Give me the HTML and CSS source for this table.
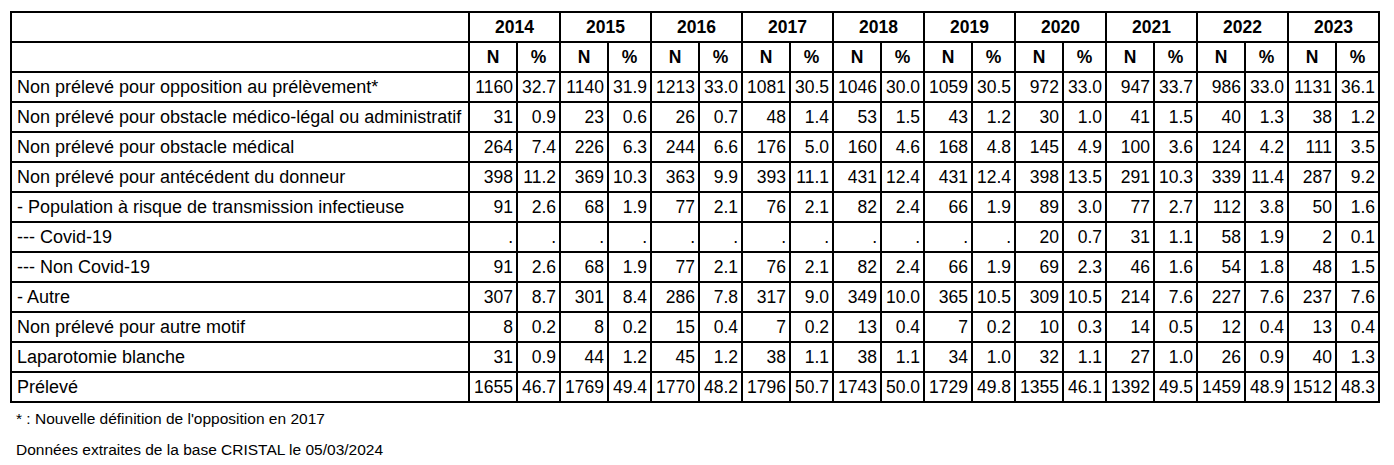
FILE: index.html
```html
<!DOCTYPE html>
<html lang="fr">
<head>
<meta charset="utf-8">
<title>Non prélevés</title>
<link rel="stylesheet" href="styles.css">
</head>
<body>
<table class="stats">
<colgroup>
<col class="c-label">
<col class="c-n"><col class="c-p">
<col class="c-n"><col class="c-p">
<col class="c-n"><col class="c-p">
<col class="c-n"><col class="c-p">
<col class="c-n"><col class="c-p">
<col class="c-n"><col class="c-p">
<col class="c-n"><col class="c-p">
<col class="c-n"><col class="c-p">
<col class="c-n"><col class="c-p">
<col class="c-n"><col class="c-p">
</colgroup>
<thead>
<tr class="yr"><th></th><th colspan="2">2014</th><th colspan="2">2015</th><th colspan="2">2016</th><th colspan="2">2017</th><th colspan="2">2018</th><th colspan="2">2019</th><th colspan="2">2020</th><th colspan="2">2021</th><th colspan="2">2022</th><th colspan="2">2023</th></tr>
<tr class="np"><th></th><th>N</th><th>%</th><th>N</th><th>%</th><th>N</th><th>%</th><th>N</th><th>%</th><th>N</th><th>%</th><th>N</th><th>%</th><th>N</th><th>%</th><th>N</th><th>%</th><th>N</th><th>%</th><th>N</th><th>%</th></tr>
</thead>
<tbody>
<tr><td>Non prélevé pour opposition au prélèvement*</td><td>1160</td><td>32.7</td><td>1140</td><td>31.9</td><td>1213</td><td>33.0</td><td>1081</td><td>30.5</td><td>1046</td><td>30.0</td><td>1059</td><td>30.5</td><td>972</td><td>33.0</td><td>947</td><td>33.7</td><td>986</td><td>33.0</td><td>1131</td><td>36.1</td></tr>
<tr><td>Non prélevé pour obstacle médico-légal ou administratif</td><td>31</td><td>0.9</td><td>23</td><td>0.6</td><td>26</td><td>0.7</td><td>48</td><td>1.4</td><td>53</td><td>1.5</td><td>43</td><td>1.2</td><td>30</td><td>1.0</td><td>41</td><td>1.5</td><td>40</td><td>1.3</td><td>38</td><td>1.2</td></tr>
<tr><td>Non prélevé pour obstacle médical</td><td>264</td><td>7.4</td><td>226</td><td>6.3</td><td>244</td><td>6.6</td><td>176</td><td>5.0</td><td>160</td><td>4.6</td><td>168</td><td>4.8</td><td>145</td><td>4.9</td><td>100</td><td>3.6</td><td>124</td><td>4.2</td><td>111</td><td>3.5</td></tr>
<tr><td>Non prélevé pour antécédent du donneur</td><td>398</td><td>11.2</td><td>369</td><td>10.3</td><td>363</td><td>9.9</td><td>393</td><td>11.1</td><td>431</td><td>12.4</td><td>431</td><td>12.4</td><td>398</td><td>13.5</td><td>291</td><td>10.3</td><td>339</td><td>11.4</td><td>287</td><td>9.2</td></tr>
<tr><td>- Population à risque de transmission infectieuse</td><td>91</td><td>2.6</td><td>68</td><td>1.9</td><td>77</td><td>2.1</td><td>76</td><td>2.1</td><td>82</td><td>2.4</td><td>66</td><td>1.9</td><td>89</td><td>3.0</td><td>77</td><td>2.7</td><td>112</td><td>3.8</td><td>50</td><td>1.6</td></tr>
<tr><td>--- Covid-19</td><td>.</td><td>.</td><td>.</td><td>.</td><td>.</td><td>.</td><td>.</td><td>.</td><td>.</td><td>.</td><td>.</td><td>.</td><td>20</td><td>0.7</td><td>31</td><td>1.1</td><td>58</td><td>1.9</td><td>2</td><td>0.1</td></tr>
<tr><td>--- Non Covid-19</td><td>91</td><td>2.6</td><td>68</td><td>1.9</td><td>77</td><td>2.1</td><td>76</td><td>2.1</td><td>82</td><td>2.4</td><td>66</td><td>1.9</td><td>69</td><td>2.3</td><td>46</td><td>1.6</td><td>54</td><td>1.8</td><td>48</td><td>1.5</td></tr>
<tr><td>- Autre</td><td>307</td><td>8.7</td><td>301</td><td>8.4</td><td>286</td><td>7.8</td><td>317</td><td>9.0</td><td>349</td><td>10.0</td><td>365</td><td>10.5</td><td>309</td><td>10.5</td><td>214</td><td>7.6</td><td>227</td><td>7.6</td><td>237</td><td>7.6</td></tr>
<tr><td>Non prélevé pour autre motif</td><td>8</td><td>0.2</td><td>8</td><td>0.2</td><td>15</td><td>0.4</td><td>7</td><td>0.2</td><td>13</td><td>0.4</td><td>7</td><td>0.2</td><td>10</td><td>0.3</td><td>14</td><td>0.5</td><td>12</td><td>0.4</td><td>13</td><td>0.4</td></tr>
<tr><td>Laparotomie blanche</td><td>31</td><td>0.9</td><td>44</td><td>1.2</td><td>45</td><td>1.2</td><td>38</td><td>1.1</td><td>38</td><td>1.1</td><td>34</td><td>1.0</td><td>32</td><td>1.1</td><td>27</td><td>1.0</td><td>26</td><td>0.9</td><td>40</td><td>1.3</td></tr>
<tr><td>Prélevé</td><td>1655</td><td>46.7</td><td>1769</td><td>49.4</td><td>1770</td><td>48.2</td><td>1796</td><td>50.7</td><td>1743</td><td>50.0</td><td>1729</td><td>49.8</td><td>1355</td><td>46.1</td><td>1392</td><td>49.5</td><td>1459</td><td>48.9</td><td>1512</td><td>48.3</td></tr>
</tbody>
</table>
<p class="note">* : Nouvelle définition de l'opposition en 2017</p>
<p class="note">Données extraites de la base CRISTAL le 05/03/2024</p>
</body>
</html>
```
FILE: styles.css
```css
body {
  margin: 0;
  padding: 11px 10px 0 10px;
  background: #ffffff;
  color: #000000;
  font-family: "Liberation Sans", Arial, sans-serif;
}

.stats {
  border-collapse: collapse;
  table-layout: fixed;
  font-size: 17.5px;
}

.c-label { width: 458px; }
.c-n { width: 48px; }
.c-p { width: 43px; }

.stats th,
.stats td {
  border: 2px solid #000;
  height: 28px;
  vertical-align: middle;
  white-space: nowrap;
  line-height: 20px;
}

.stats th {
  font-weight: bold;
  text-align: center;
  padding: 0;
}

.stats td {
  text-align: right;
  padding: 0 3px 0 0;
}

.stats td:first-child {
  font-size: 18px;
  text-align: left;
  padding-left: 5px;
}

.note {
  margin: 0;
  padding-left: 6px;
  font-size: 15.5px;
  line-height: 31px;
}
```
